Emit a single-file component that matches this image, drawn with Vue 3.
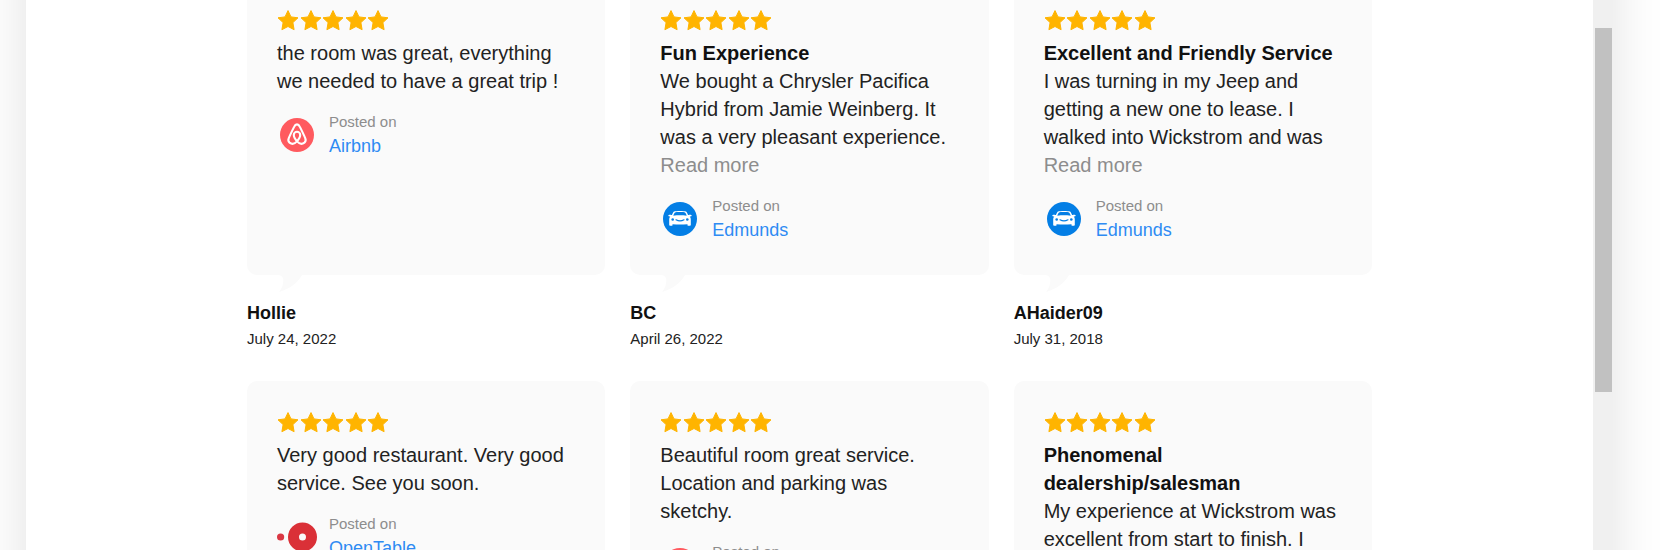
<script setup>
const reviews = [
  {
    text: 'the room was great, everything we needed to have a great trip !',
    source: 'Airbnb',
    author: 'Hollie',
    date: 'July 24, 2022',
  },
  {
    title: 'Fun Experience',
    text: 'We bought a Chrysler Pacifica Hybrid from Jamie Weinberg. It was a very pleasant experience.',
    more: true,
    source: 'Edmunds',
    author: 'BC',
    date: 'April 26, 2022',
  },
  {
    title: 'Excellent and Friendly Service',
    text: 'I was turning in my Jeep and getting a new one to lease. I walked into Wickstrom and was',
    more: true,
    source: 'Edmunds',
    author: 'AHaider09',
    date: 'July 31, 2018',
  },
  {
    text: 'Very good restaurant. Very good service. See you soon.',
    source: 'OpenTable',
  },
  {
    text: 'Beautiful room great service. Location and parking was sketchy.',
    source: 'Airbnb',
  },
  {
    title: 'Phenomenal dealership/salesman',
    text: 'My experience at Wickstrom was excellent from start to finish. I',
    more: true,
    source: 'Edmunds',
  },
]
</script>

<template>
  <div class="page">
    <div class="modal">
      <main class="content">
        <div class="grid">
          <article v-for="(r, i) in reviews" :key="i" class="review">
            <div class="card">
              <div class="stars" role="img" aria-label="5 out of 5 stars">
                <svg v-for="n in 5" :key="n" viewBox="0 0 22 22">
                  <path d="M11 1.600 14 7.900 21 8.800 15.900 13.600 17.100 20.700 11 17.500 4.900 20.700 6.100 13.600 1 8.800 8 7.900Z" />
                </svg>
              </div>
              <h3 v-if="r.title" class="title">{{ r.title }}</h3>
              <p class="text">{{ r.text }}</p>
              <button v-if="r.more" type="button" class="more">Read more</button>
              <div class="source">
                <svg v-if="r.source === 'Airbnb'" class="logo" viewBox="0 0 40 40" aria-hidden="true">
                  <circle cx="20" cy="20" r="17" fill="#ff5a5f" />
                  <path
                    d="M20 26.4C17.8 23.6 16.8 21.6 16.8 19.9a3.2 3.2 0 0 1 6.4 0C23.2 21.6 22.2 23.6 20 26.4C17.6 29 14.6 29.2 12.600 27.600C11.200 26.400 11 25 11.700 23.300C13.200 19.700 15.500 15.100 17.100 11.900C17.900 10.100 18.600 9.400 20 9.400s2.100.8 2.900 2.500C24.500 15.100 26.800 19.700 28.300 23.300C29 25 28.800 26.400 27.400 27.600C25.400 29.200 22.400 29 20 26.400Z"
                    fill="none"
                    stroke="#fff"
                    stroke-width="2.1"
                    stroke-linejoin="round"
                  />
                </svg>
                <svg v-else-if="r.source === 'Edmunds'" class="logo" viewBox="0 0 40 40" aria-hidden="true">
                  <circle cx="20" cy="20" r="17" fill="#037ee5" />
                  <path
                    fill="#fff"
                    fill-rule="evenodd"
                    d="M14 12.600C15 12 17.500 11.900 20 11.900s5 .1 6 .7c.8.6 1.500 2.200 2.100 3.500h.7c.3-.7 2.900-.6 2.900.3 0 .8-.8 1.100-2 1.100.8.8 1.100 1.800 1.100 3.200V26c0 .6-.3.8-.9.8h-1.500c-.6 0-.9-.3-.9-.9v-.7q-7.500.6-15 0v.7c0 .6-.3.9-.9.9H10.100c-.6 0-.9-.2-.9-.8v-5.300c0-1.400.3-2.400 1.100-3.200-1.200 0-2-.3-2-1.100 0-.9 2.600-1 2.900-.3h.7c.6-1.300 1.300-2.900 2.100-3.500ZM15 13.500c-.6.4-1.300 1.800-1.700 3.200 4.400-.6 9-.6 13.400 0-.4-1.400-1.100-2.800-1.700-3.200-1-.6-9-.6-10 0Z"
                  />
                  <circle cx="12.700" cy="20.500" r="1.300" fill="#037ee5" />
                  <circle cx="27.300" cy="20.500" r="1.300" fill="#037ee5" />
                  <path d="M16 20.800q4 2.200 8 0" fill="none" stroke="#037ee5" stroke-width="1.200" stroke-linecap="round" />
                </svg>
                <svg v-else class="logo" viewBox="0 0 40 40" aria-hidden="true">
                  <circle cx="3.600" cy="20" r="3.600" fill="#da3743" />
                  <circle cx="25.500" cy="20" r="9" fill="none" stroke="#da3037" stroke-width="11" />
                </svg>
                <div class="posted">
                  <span class="label">Posted on</span>
                  <a class="link" href="#">{{ r.source }}</a>
                </div>
              </div>
              <svg class="tail" viewBox="0 0 24 17" aria-hidden="true">
                <path d="M0 0C4 1 5 4 4 8C3.500 11.500 2.500 14 0 17C10 14 18 9 23 0Z" />
              </svg>
            </div>
            <footer v-if="r.author" class="byline">
              <strong class="author">{{ r.author }}</strong>
              <time class="date">{{ r.date }}</time>
            </footer>
          </article>
        </div>
      </main>
      <div class="track"><div class="thumb"></div></div>
    </div>
  </div>
</template>

<style>
body {
  margin: 0;
  background: #fff;
}
</style>

<style scoped>
.page {
  box-sizing: border-box;
  height: 100vh;
  overflow: hidden;
  padding: 0 48px 0 26px;
  font-family: "Liberation Sans", Arial, sans-serif;
  color: #222;
}
.modal {
  position: relative;
  display: flex;
  height: 100%;
}
.modal::before {
  content: "";
  position: absolute;
  inset: -100px 0;
  background: #fff;
  box-shadow: 0 0 50px rgba(0, 0, 0, 0.12);
}
.content {
  position: relative;
  flex: 1;
  min-width: 0;
  overflow: hidden;
}
.grid {
  display: grid;
  grid-template-columns: repeat(3, minmax(0, 1fr));
  gap: 29px 25px;
  max-width: 1125px;
  margin: -21px auto 0;
}
.review {
  display: flex;
  flex-direction: column;
}
.card {
  position: relative;
  flex: 1;
  padding: 30px 30px 32px;
  border-radius: 10px;
  background: #fafafa;
}
.stars {
  display: flex;
  justify-content: space-between;
  width: 112px;
  height: 30px;
}
.stars svg {
  width: 22px;
  height: 22px;
  fill: #ffb400;
  stroke: #ffb400;
  stroke-width: 1;
  stroke-linejoin: round;
}
.title,
.text {
  margin: 0;
  font-size: 20px;
  line-height: 28px;
}
.title {
  font-weight: 700;
  color: #111;
}
.more {
  display: block;
  padding: 0;
  border: 0;
  background: none;
  font: inherit;
  font-size: 20px;
  line-height: 28px;
  color: #8d8d8d;
  cursor: pointer;
}
.source {
  display: flex;
  align-items: center;
  gap: 12px;
  margin-top: 15px;
}
.logo {
  width: 40px;
  height: 40px;
}
.posted {
  display: flex;
  flex-direction: column;
}
.label {
  font-size: 15px;
  line-height: 24px;
  color: #8d8d8d;
}
.link {
  font-size: 18px;
  line-height: 25px;
  color: #2e8bf3;
  text-decoration: none;
}
.tail {
  position: absolute;
  top: 100%;
  left: 32px;
  width: 24px;
  height: 17px;
  fill: #fafafa;
}
.byline {
  display: flex;
  flex-direction: column;
  margin-top: 26px;
}
.author {
  font-size: 18px;
  line-height: 25px;
  color: #111;
}
.date {
  font-size: 15px;
  line-height: 26px;
}
.track {
  position: relative;
  box-sizing: border-box;
  width: 19px;
  padding: 28px 0 0 2px;
  background: #f0f0f0;
}
.thumb {
  height: 364px;
  background: #c1c1c1;
}
</style>
